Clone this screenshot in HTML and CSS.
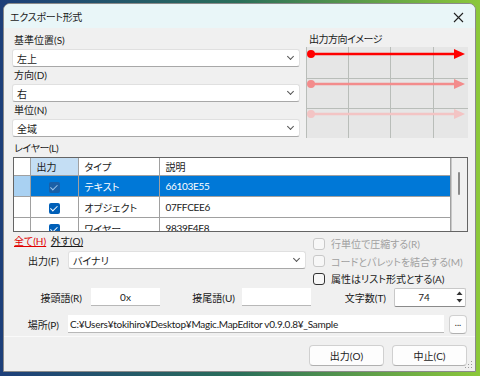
FILE: index.html
```html
<!DOCTYPE html>
<html lang="ja">

<head>
    <meta charset="UTF-8">
    <title>エクスポート形式</title>
    <link rel="stylesheet" href="styles.css">
</head>

<body>
    <div class="window">
        <div class="titlebar">
            <span class="title">エクスポート形式</span>
            <svg class="close" width="11" height="11" viewBox="0 0 11 11">
                <path d="M1 1 L10 10 M10 1 L1 10" stroke="#222" stroke-width="1.1" fill="none" />
            </svg>
        </div>

        <div class="content">
            <div class="top">
                <div class="fields">
                    <div class="label">基準位置(S)</div>
                    <div class="combo"><span>左上</span><span class="chev"></span></div>
                    <div class="label">方向(D)</div>
                    <div class="combo"><span>右</span><span class="chev"></span></div>
                    <div class="label">単位(N)</div>
                    <div class="combo"><span>全域</span><span class="chev"></span></div>
                </div>
                <div class="preview">
                    <div class="preview-label">出力方向イメージ</div>
                    <svg class="preview-grid" width="162" height="91" viewBox="0 0 162 91">
                        <rect x="0" y="0" width="162" height="91" fill="#e6e6e6" />
                        <path d="M0.5 0 V91 M42.5 0 V91 M84.5 0 V91 M127.5 0 V91 M0 31.5 H162 M0 61.5 H162"
                            stroke="#b9bdb9" stroke-width="1" fill="none" />
                        <g stroke="#ff0000" fill="#ff0000">
                            <circle cx="5" cy="7" r="4" stroke="none" />
                            <line x1="5" y1="7" x2="150" y2="7" stroke-width="2.5" />
                            <polygon points="148,2 159,7 148,12" stroke="none" />
                        </g>
                        <g stroke="#f38c8c" fill="#f38c8c">
                            <circle cx="5" cy="37" r="4" stroke="none" />
                            <line x1="5" y1="37" x2="150" y2="37" stroke-width="2.5" />
                            <polygon points="148,32 159,37 148,42" stroke="none" />
                        </g>
                        <g stroke="#f3c4c4" fill="#f3c4c4">
                            <circle cx="5" cy="67" r="4" stroke="none" />
                            <line x1="5" y1="67" x2="150" y2="67" stroke-width="2.5" />
                            <polygon points="148,62 159,67 148,72" stroke="none" />
                        </g>
                    </svg>
                </div>
            </div>

            <div class="label layer-label">レイヤー(L)</div>
            <div class="layers">
                <table class="grid">
                    <colgroup>
                        <col class="w0">
                        <col class="w1">
                        <col class="w2">
                        <col>
                    </colgroup>
                    <tr class="head">
                        <td></td>
                        <td class="on">出力</td>
                        <td>タイプ</td>
                        <td>説明</td>
                    </tr>
                    <tr class="sel">
                        <td class="c0"></td>
                        <td class="c1"><span class="check dark"></span></td>
                        <td>テキスト</td>
                        <td class="code">66103E55</td>
                    </tr>
                    <tr>
                        <td></td>
                        <td class="c1"><span class="check"></span></td>
                        <td>オブジェクト</td>
                        <td class="code">07FFCEE6</td>
                    </tr>
                    <tr>
                        <td></td>
                        <td class="c1"><span class="check"></span></td>
                        <td>ワイヤー</td>
                        <td class="code">9839F4F8</td>
                    </tr>
                </table>
                <div class="scrollbar"><div class="thumb"></div></div>
            </div>

            <div class="lower">
                <div class="lower-left">
                    <div class="links">
                        <span class="link red">全て(H)</span>
                        <span class="link">外す(Q)</span>
                    </div>
                    <div class="row-output">
                        <span class="side-label">出力(F)</span>
                        <div class="combo wide"><span>バイナリ</span><span class="chev"></span></div>
                    </div>
                </div>
                <div class="options">
                    <div class="option disabled"><span class="box"></span>行単位で圧縮する(R)</div>
                    <div class="option disabled"><span class="box"></span>コードとパレットを結合する(M)</div>
                    <div class="option"><span class="box"></span>属性はリスト形式とする(A)</div>
                </div>
            </div>

            <div class="row-affix">
                <span class="affix-label">接頭語(R)</span>
                <div class="textbox short">0x</div>
                <span class="affix-label second">接尾語(U)</span>
                <div class="textbox short"></div>
                <span class="affix-label third">文字数(T)</span>
                <div class="spin">
                    <span class="spin-value">74</span>
                    <span class="spin-buttons">
                        <svg width="9" height="16" viewBox="0 0 9 16">
                            <polygon points="1.5,6 4.5,2.5 7.5,6" fill="#333" />
                            <polygon points="1.5,10 4.5,13.5 7.5,10" fill="#333" />
                        </svg>
                    </span>
                </div>
            </div>

            <div class="row-place">
                <span class="side-label">場所(P)</span>
                <div class="textbox path">C:¥Users¥tokihiro¥Desktop¥Magic.MapEditor v0.9.0.8¥_Sample</div>
                <div class="btn dots">...</div>
            </div>
        </div>

        <div class="footer">
            <div class="btn action">出力(O)</div>
            <div class="btn action">中止(C)</div>
        </div>
        <svg class="grip" width="8" height="8" viewBox="0 0 8 8">
            <g fill="#9a9a9a">
                <rect x="6" y="0" width="1" height="1" />
                <rect x="3" y="3" width="1" height="1" />
                <rect x="6" y="3" width="1" height="1" />
                <rect x="0" y="6" width="1" height="1" />
                <rect x="3" y="6" width="1" height="1" />
                <rect x="6" y="6" width="1" height="1" />
            </g>
        </svg>
    </div>
</body>

</html>
```

FILE: styles.css
```css
body {
    margin: 0;
    padding: 3px 4px 4px 3px;
    background: linear-gradient(90deg, #1d3f7a 0%, #2a6f5a 50%, #8cc83a 100%);
    font-family: Lato, "Noto Sans CJK JP", sans-serif;
    font-feature-settings: "palt";
    font-size: 10px;
    color: #1a1a1a;
}

.window {
    position: relative;
    width: 471px;
    height: 367px;
    background: #f0f0f0;
    border: 1px solid #8a8a8a;
    border-radius: 7px 7px 0 0;
    overflow: hidden;
}

.titlebar {
    height: 24px;
    display: flex;
    align-items: center;
    justify-content: space-between;
    padding: 0 11px 0 6px;
    background: #e9f6f8;
}

.title {
    letter-spacing: -0.3px;
}

.close {
    margin-top: 2px;
}

.content {
    padding: 4px 7px 0 8px;
}

.top {
    display: flex;
    gap: 6px;
}

.fields {
    width: 288px;
}

.label {
    height: 17px;
    line-height: 17px;
    padding-left: 2px;
}

.combo {
    height: 18px;
    display: flex;
    align-items: center;
    justify-content: space-between;
    padding: 0 6px 0 4px;
    background: #fff;
    border: 1px solid #e0e0e0;
    border-bottom-color: #a8a8a8;
    border-radius: 3px;
    box-sizing: border-box;
}

.chev {
    width: 4px;
    height: 4px;
    border-right: 1px solid #555;
    border-bottom: 1px solid #555;
    transform: rotate(45deg);
    margin-top: -3px;
}

.preview {
    width: 162px;
}

.preview-label {
    height: 15px;
    line-height: 15px;
    padding-left: 3px;
    letter-spacing: -0.5px;
}

.preview-grid {
    display: block;
}

.layer-label {
    margin-top: 2px;
    letter-spacing: -0.4px;
}

.layers {
    display: flex;
    width: 455px;
    height: 75px;
    margin-left: 1px;
    border: 1px solid #646464;
    background: #fff;
    box-sizing: border-box;
    overflow: hidden;
}

.grid {
    flex: 1;
    border-collapse: collapse;
    table-layout: fixed;
    height: 80px;
}

.w0 {
    width: 16px;
}

.w1 {
    width: 48px;
}

.w2 {
    width: 81px;
}

.grid td {
    border: 1px solid #a0a0a0;
    padding: 0 0 0 6px;
    height: 20px;
    white-space: nowrap;
    overflow: hidden;
}

.grid tr:first-child td {
    border-top: none;
}

.grid td:first-child {
    border-left: none;
}

.grid .head td {
    height: 17px;
}

.head .on {
    background: #c4def4;
}

.grid td.c1 {
    text-align: center;
    padding: 0;
}

.code {
    letter-spacing: -0.3px;
}

.sel td {
    background: #0078d7;
    color: #fff;
}

.sel td.c0 {
    background: #a9d1f2;
}

.check {
    display: inline-block;
    width: 11px;
    height: 11px;
    margin-top: 4px;
    border-radius: 2px;
    background: #005fb8;
    position: relative;
}

.check::after {
    content: "";
    position: absolute;
    left: 3.5px;
    top: 1px;
    width: 2.5px;
    height: 6px;
    border-right: 1.2px solid #fff;
    border-bottom: 1.2px solid #fff;
    transform: rotate(45deg);
}

.check.dark {
    background: #1a5fa6;
}

.check.dark::after {
    border-color: #9cc4ea;
}

.scrollbar {
    width: 15px;
    background: #f0f0f0;
    border-left: 1px solid #c8c8c8;
    position: relative;
}

.thumb {
    position: absolute;
    left: 6px;
    top: 14px;
    width: 2px;
    height: 23px;
    background: #8a8a8a;
    border-radius: 1px;
}

.lower {
    display: flex;
    gap: 7px;
    margin-top: 1px;
}

.lower-left {
    width: 294px;
}

.links {
    height: 17px;
    line-height: 17px;
    padding-left: 2px;
}

.link {
    text-decoration: underline;
    margin-right: 2px;
}

.link.red {
    color: #e00000;
}

.row-output {
    display: flex;
    align-items: center;
    margin-top: 1px;
}

.side-label {
    width: 56px;
    text-align: right;
    padding-right: 9px;
    box-sizing: border-box;
    flex-shrink: 0;
}

.combo.wide {
    flex: 1;
}

.options {
    display: flex;
    flex-direction: column;
    padding-top: 2px;
}

.option {
    display: flex;
    align-items: center;
    height: 17.5px;
    white-space: nowrap;
}

.box {
    width: 10px;
    height: 10px;
    border: 1px solid #333;
    border-radius: 3px;
    margin-right: 6px;
    background: #f7f7f7;
}

.disabled {
    color: #a0a0a0;
}

.disabled .box {
    border-color: #c8c8c8;
}

.row-affix {
    display: flex;
    align-items: center;
    height: 19px;
}

.affix-label {
    width: 79px;
    text-align: right;
    padding-right: 9px;
    box-sizing: border-box;
    flex-shrink: 0;
}

.affix-label.second {
    width: 82px;
    padding-right: 7px;
}

.affix-label.third {
    width: 83px;
    padding-right: 8px;
}

.textbox {
    height: 18px;
    line-height: 18px;
    background: #fff;
    border-bottom: 1px solid #b8b8b8;
    box-sizing: border-box;
    white-space: nowrap;
    overflow: hidden;
}

.textbox.short {
    width: 69px;
    text-align: center;
}

.spin {
    width: 72px;
    height: 19px;
    display: flex;
    background: #fff;
    border: 1px solid #c8c8c8;
    border-bottom-color: #8a8a8a;
    box-sizing: border-box;
    border-radius: 2px;
}

.spin-value {
    flex: 1;
    text-align: center;
    line-height: 17px;
}

.spin-buttons {
    width: 12px;
    display: flex;
    align-items: center;
    justify-content: center;
}

.row-place {
    display: flex;
    align-items: center;
    margin-top: 8px;
}

.textbox.path {
    width: 376px;
    padding-left: 2px;
    margin-right: 5px;
    letter-spacing: -0.25px;
}

.btn {
    display: flex;
    align-items: center;
    justify-content: center;
    background: #fdfdfd;
    border: 1px solid #d0d0d0;
    border-bottom-color: #b0b0b0;
    border-radius: 4px;
    box-sizing: border-box;
}

.dots {
    width: 18px;
    height: 19px;
    font-size: 9px;
    padding-bottom: 3px;
}

.footer {
    display: flex;
    justify-content: flex-end;
    gap: 8px;
    margin-top: 2px;
    padding: 8px 8px 0 0;
    border-top: 1px solid #fafafa;
}

.action {
    width: 75px;
    height: 21px;
}

.grip {
    position: absolute;
    right: 2px;
    bottom: 2px;
}
```
